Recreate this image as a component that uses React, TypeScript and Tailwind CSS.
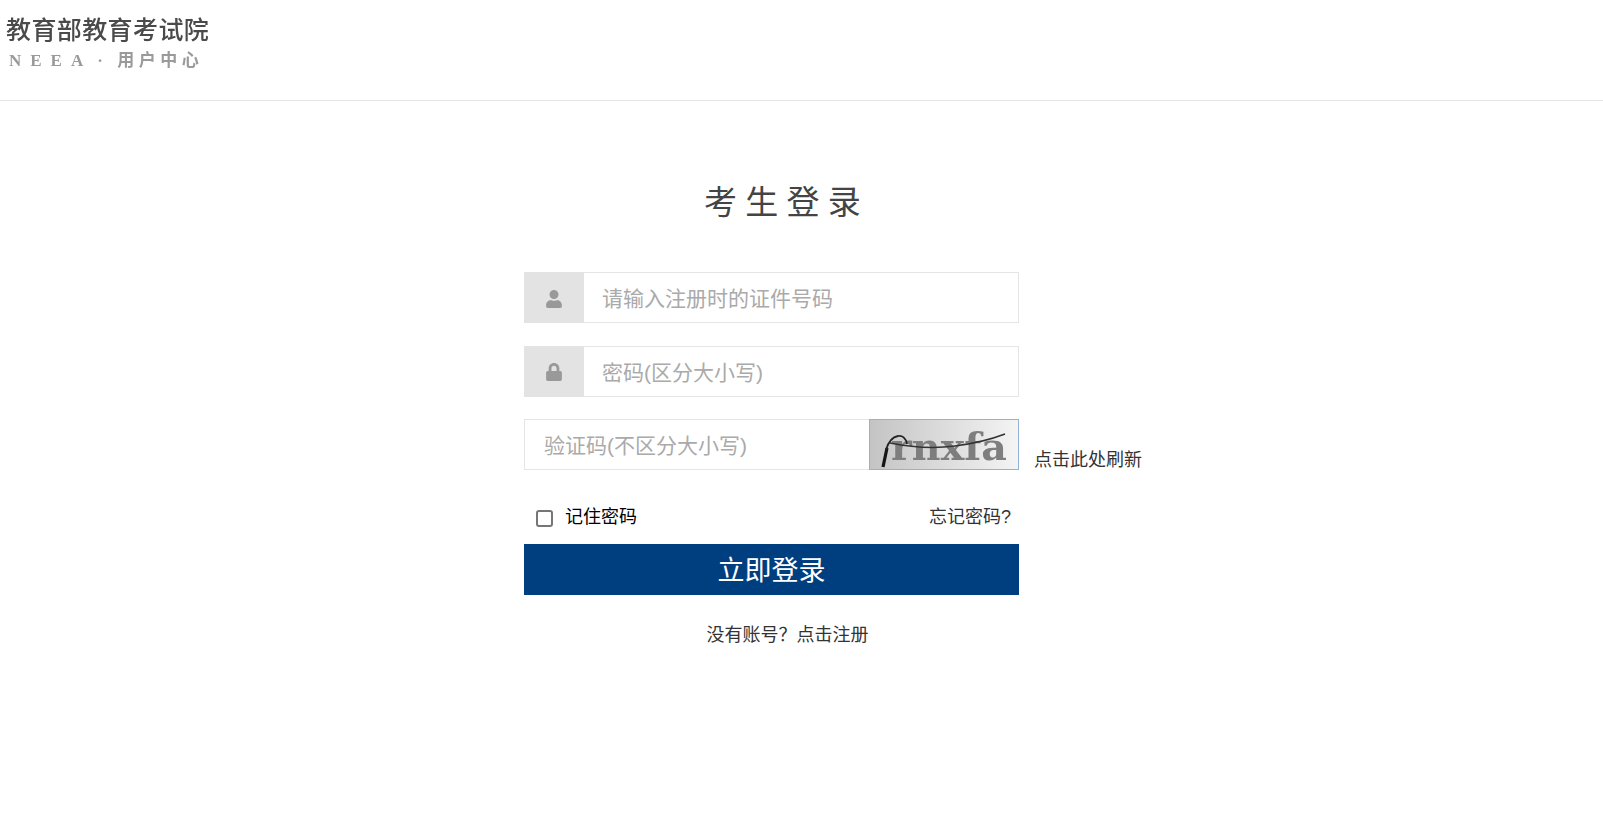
import { FaUser, FaLock } from 'react-icons/fa';

const FONT = 'font-["Liberation_Sans","Noto_Sans_CJK_SC",sans-serif]';

function Captcha() {
  return (
    <svg viewBox="0 0 148 49" className="block h-full w-full">
      <defs>
        <linearGradient id="captchaBg" x1="0" y1="0" x2="1" y2="0">
          <stop offset="0" stopColor="#c4c4c4" />
          <stop offset="1" stopColor="#f4f4f4" />
        </linearGradient>
      </defs>
      <rect width="148" height="49" fill="url(#captchaBg)" />
      <text x="21" y="40" fontFamily="'DejaVu Serif', serif" fontWeight="700" fontSize="38" textLength="116" lengthAdjust="spacingAndGlyphs" fill="#7e7e7e" style={{ filter: 'blur(0.6px)' }}>
        rnxfa
      </text>
      <path d="M13 47 L17 28" fill="none" stroke="#151515" strokeWidth="3.2" />
      <path d="M16 30 C18 23 22 17 28 16 C32 15 36 18 37 24" fill="none" stroke="#222" strokeWidth="1.8" />
      <path d="M20 23 C40 27 62 29 85 26 C108 23 122 19 135 14" fill="none" stroke="#333" strokeWidth="1.6" />
    </svg>
  );
}

export default function App() {
  return (
    <div className={`min-h-[840px] bg-white ${FONT}`}>
      <header className="h-[101px] border-b border-[#e5e5e5] pl-[6px] pt-[13px]">
        <div className="blur-[0.5px]">
          <div className="text-[25px] font-medium leading-[34px] tracking-[0.4px] text-[#4a4a4a]">教育部教育考试院</div>
          <div className="mt-[3px] flex items-center pl-[3px] font-['Liberation_Serif','Noto_Sans_CJK_SC',serif] text-[17px] font-bold leading-[22px] text-[#9a9a9a]">
            <span className="tracking-[9px]">NEEA</span>
            <span className="ml-[5px] w-[20px]">·</span>
            <span className="tracking-[4.5px]">用户中心</span>
          </div>
        </div>
      </header>

      <main className="ml-[524px] w-[495px]">
        <h1 className="mt-[79px] pl-[30px] text-center text-[33px] font-normal leading-[46px] tracking-[8.3px] text-[#444]">考生登录</h1>

        <div className="mt-[46px] flex h-[51px] border border-[#e5e5e5]">
          <div className="-m-px flex w-[60px] shrink-0 items-center justify-center bg-[#e3e3e3] pt-[2px]">
            <FaUser size={18} color="#999" />
          </div>
          <input
            className="min-w-0 flex-1 pl-[19px] pt-[3px] text-[21px] outline-none placeholder:text-[#aaa]"
            placeholder="请输入注册时的证件号码"
          />
        </div>

        <div className="mt-[23px] flex h-[51px] border border-[#e5e5e5]">
          <div className="-m-px flex w-[60px] shrink-0 items-center justify-center bg-[#e3e3e3]">
            <FaLock size={18} color="#999" />
          </div>
          <input className="min-w-0 flex-1 pl-[19px] pt-[3px] text-[21px] outline-none placeholder:text-[#aaa]" placeholder="密码(区分大小写)" />
        </div>

        <div className="relative mt-[22px] flex h-[51px]">
          <input
            className="min-w-0 flex-1 border border-r-0 border-[#e5e5e5] pl-[19px] pt-[3px] text-[21px] outline-none placeholder:text-[#aaa]"
            placeholder="验证码(不区分大小写)"
          />
          <div className="h-[51px] w-[150px] shrink-0 border border-[#8fb4d6]">
            <Captcha />
          </div>
          <span className="absolute left-[510px] top-[28px] whitespace-nowrap text-[18px] leading-[26px] text-[#333]">点击此处刷新</span>
        </div>

        <div className="mt-[31px] flex h-[43px] items-start justify-between pl-[12px] pr-[8px]">
          <label className="flex items-start">
            <input type="checkbox" className="mt-[9px] h-[17px] w-[17px] appearance-none rounded-[3px] border-2 border-[#767676] bg-white" />
            <span className="ml-[12px] pt-[2px] text-[18px] leading-[28px] text-black">记住密码</span>
          </label>
          <span className="pt-[2px] text-[18px] leading-[28px] text-[#333]">忘记密码?</span>
        </div>

        <button className="block h-[51px] w-full bg-[#003f7f] pt-[3px] text-center text-[27px] leading-[48px] text-white">立即登录</button>

        <p className="mt-[25px] pl-[32px] text-center text-[18px] leading-[30px] text-[#333]">没有账号？点击注册</p>
      </main>
    </div>
  );
}
